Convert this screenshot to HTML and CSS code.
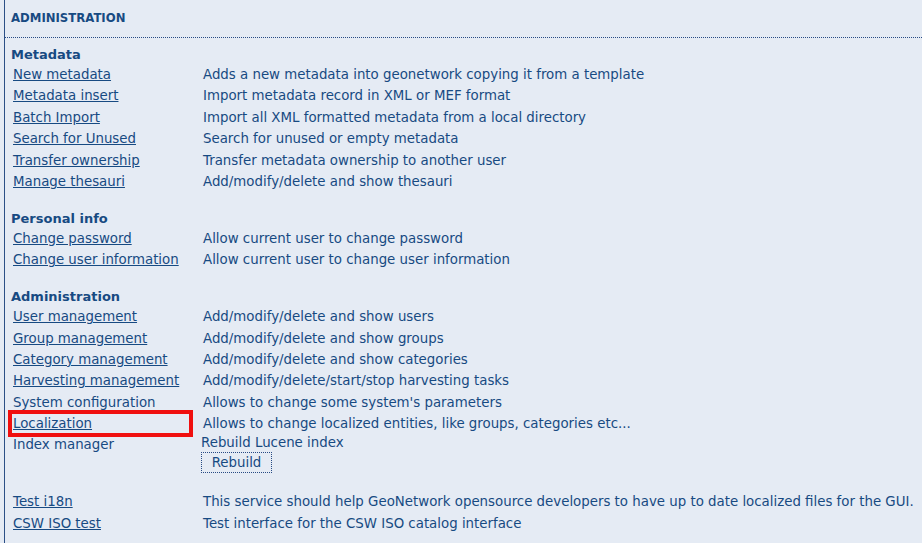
FILE: index.html
```html
<!DOCTYPE html>
<html>
<head>
<meta charset="utf-8">
<link rel="stylesheet" href="styles.css">
</head>
<body>
<div class="panel">
  <div class="panel-head">ADMINISTRATION</div>
  <div class="panel-body">
    <div class="section">
      <div class="section-title">Metadata</div>
      <div class="rows">
        <div class="label"><a href="#">New metadata</a></div><div class="desc">Adds a new metadata into geonetwork copying it from a template</div>
        <div class="label"><a href="#">Metadata insert</a></div><div class="desc">Import metadata record in XML or MEF format</div>
        <div class="label"><a href="#">Batch Import</a></div><div class="desc">Import all XML formatted metadata from a local directory</div>
        <div class="label"><a href="#">Search for Unused</a></div><div class="desc">Search for unused or empty metadata</div>
        <div class="label"><a href="#">Transfer ownership</a></div><div class="desc">Transfer metadata ownership to another user</div>
        <div class="label"><a href="#">Manage thesauri</a></div><div class="desc">Add/modify/delete and show thesauri</div>
      </div>
    </div>
    <div class="section">
      <div class="section-title">Personal info</div>
      <div class="rows">
        <div class="label"><a href="#">Change password</a></div><div class="desc">Allow current user to change password</div>
        <div class="label"><a href="#">Change user information</a></div><div class="desc">Allow current user to change user information</div>
      </div>
    </div>
    <div class="section">
      <div class="section-title">Administration</div>
      <div class="rows">
        <div class="label"><a href="#">User management</a></div><div class="desc">Add/modify/delete and show users</div>
        <div class="label"><a href="#">Group management</a></div><div class="desc">Add/modify/delete and show groups</div>
        <div class="label"><a href="#">Category management</a></div><div class="desc">Add/modify/delete and show categories</div>
        <div class="label"><a href="#">Harvesting management</a></div><div class="desc">Add/modify/delete/start/stop harvesting tasks</div>
        <div class="label">System configuration</div><div class="desc">Allows to change some system's parameters</div>
        <div class="label highlighted"><a href="#">Localization</a><span class="mark"></span></div><div class="desc">Allows to change localized entities, like groups, categories etc...</div>
        <div class="label">Index manager</div>
        <div class="desc desc-index">
          <div class="index-text">Rebuild Lucene index</div>
          <button class="btn" type="button">Rebuild</button>
        </div>
      </div>
    </div>
    <div class="section section-tests">
      <div class="rows">
        <div class="label"><a href="#">Test i18n</a></div><div class="desc">This service should help GeoNetwork opensource developers to have up to date localized files for the GUI.</div>
        <div class="label"><a href="#">CSW ISO test</a></div><div class="desc">Test interface for the CSW ISO catalog interface</div>
      </div>
    </div>
  </div>
</div>
</body>
</html>
```

FILE: styles.css
```css
html, body {
  margin: 0;
  padding: 0;
  background: #e5ebf4;
}
body {
  font-family: "DejaVu Sans", Verdana, sans-serif;
  color: #174a82;
  height: 543px;
  overflow: hidden;
}
.panel {
  margin-left: 4px;
  border-left: 1px solid #2b4f86;
  min-height: 543px;
}
.panel-head {
  height: 37px;
  line-height: 37px;
  padding-left: 6px;
  font-size: 11.7px;
  font-weight: bold;
  border-bottom: 1px dotted #274a84;
}
.panel-body {
  padding-left: 6px;
  padding-top: 6px;
}
.section + .section {
  margin-top: 15.5px;
}
.section-title {
  font-size: 13px;
  font-weight: bold;
  line-height: 18px;
  padding-top: 2px;
}
.rows {
  display: grid;
  grid-template-columns: 192px 1fr;
  grid-auto-rows: 21.4px;
  font-size: 13.35px;
  line-height: 21.4px;
}
.label {
  padding-left: 2px;
  white-space: nowrap;
}
.desc {
  white-space: nowrap;
}
a {
  color: #174a82;
  text-decoration: underline;
}
.highlighted {
  position: relative;
}
.mark {
  position: absolute;
  left: -3px;
  top: -3px;
  width: 177px;
  height: 19px;
  border: 4px solid #f00f0f;
  pointer-events: none;
}
.desc-index {
  grid-row: span 2;
  margin-left: -2px;
}
.index-text {
  line-height: 17px;
}
.btn {
  display: block;
  margin-top: 1px;
  width: 71px;
  height: 21px;
  padding: 0;
  font-family: "DejaVu Sans", Verdana, sans-serif;
  font-size: 13.35px;
  color: #174a82;
  background: #e5ebf4;
  border: 1px dotted #274a84;
}
.section-tests {
  margin-top: 14px !important;
}
```
